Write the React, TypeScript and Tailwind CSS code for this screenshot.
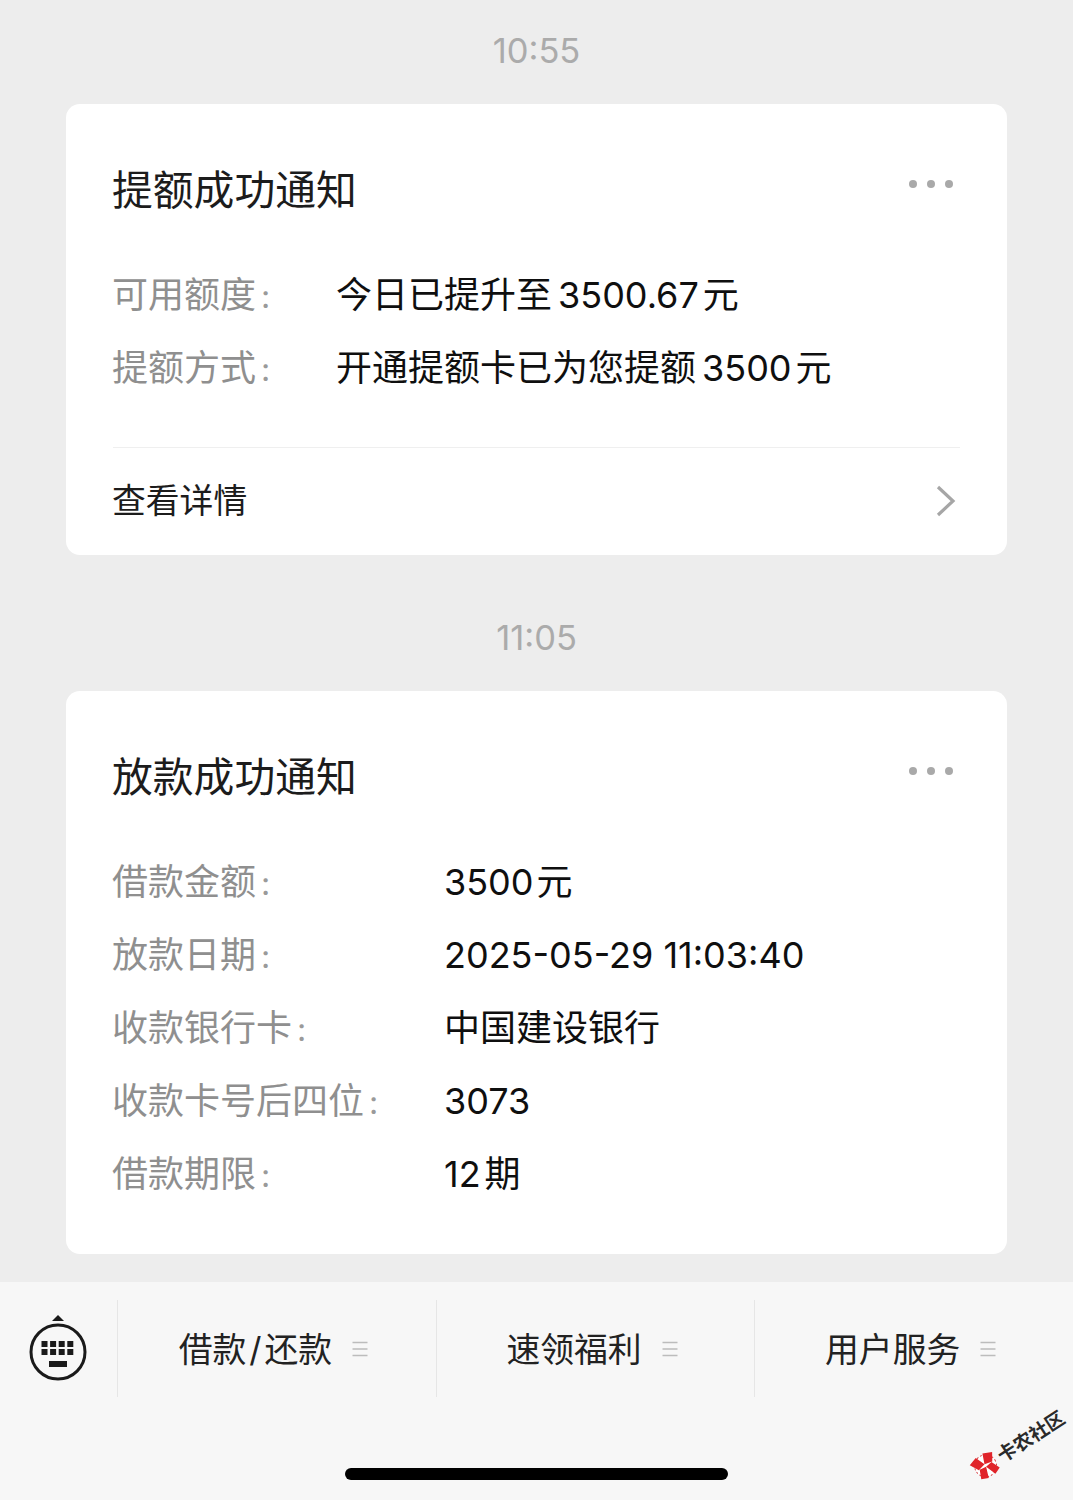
const FONT = '[font-family:Inter,"Noto_Sans_CJK_SC","Liberation_Sans",sans-serif]';

type Row = { label: string; value: React.ReactNode };

function Gap() {
  return <span className="inline-block w-[6px]" />;
}

function EndGap() {
  return <span className="inline-block w-[4px]" />;
}

function SmallGap() {
  return <span className="inline-block w-[3px]" />;
}

function Label({ text }: { text: string }) {
  return (
    <span className="text-[36px] leading-[73px] text-[#8f8f8f]">
      {text}
      <span className="ml-[5px] text-[32px] text-[#9a9a9a]">:</span>
    </span>
  );
}

function Dots() {
  return (
    <div className="mt-[-12px] mr-[7px] flex gap-[10px]">
      <span className="h-[8px] w-[8px] rounded-full bg-[#a9a9a9]" />
      <span className="h-[8px] w-[8px] rounded-full bg-[#a9a9a9]" />
      <span className="h-[8px] w-[8px] rounded-full bg-[#a9a9a9]" />
    </div>
  );
}

function Card({
  title,
  rows,
  labelW,
  footer,
}: {
  title: string;
  rows: Row[];
  labelW: string;
  footer?: boolean;
}) {
  return (
    <div className="mx-[66px] rounded-[14px] bg-white pt-[58px] pr-[47px] pl-[46px]">
      <div className="flex h-[56px] items-center justify-between">
        <div className="text-[40.8px] leading-[56px] whitespace-nowrap text-[#1c1c1c]">{title}</div>
        <Dots />
      </div>
      <div className="mt-[41px]">
        {rows.map((r, i) => (
          <div key={i} className="flex h-[73px] items-center">
            <div className={labelW}>
              <Label text={r.label} />
            </div>
            <div className="text-[36px] leading-[73px] whitespace-nowrap text-[#0f0f0f]">{r.value}</div>
          </div>
        ))}
      </div>
      {footer ? (
        <>
          <div className="mt-[42px] ml-[1px] h-px bg-[#efefef]" />
          <div className="flex h-[107px] items-center justify-between pb-[2px]">
            <div className="text-[33.8px] leading-[104px] text-[#1c1c1c]">查看详情</div>
            <svg width="20" height="32" viewBox="0 0 20 32" className="mr-[4px]" fill="none">
              <path d="M2 2 L17 16 L2 30" stroke="#a6a6a6" strokeWidth="3.2" strokeLinejoin="miter" />
            </svg>
          </div>
        </>
      ) : (
        <div className="h-[43px]" />
      )}
    </div>
  );
}

function Time({ children, h }: { children: string; h: string }) {
  return (
    <div className={`${h} flex items-center justify-center text-[34.5px] leading-none text-[#ababab]`}>
      {children}
    </div>
  );
}

function MenuIcon() {
  return (
    <svg width="16" height="16" viewBox="0 0 16 16" className="ml-[20px]" fill="none">
      <path d="M0.5 1.5H15.5M0.5 8H15.5M0.5 14.5H15.5" stroke="#bcbcbc" strokeWidth="1.6" />
    </svg>
  );
}

function Tab({ children }: { children: React.ReactNode }) {
  return (
    <div className="flex flex-1 items-center justify-center border-l border-[#e6e6e6] pr-[7px] text-[33.8px] leading-none text-[#222222]">
      <span className="pt-[2px]">{children}</span>
      <MenuIcon />
    </div>
  );
}

function KeyboardIcon() {
  const keys: [number, number][] = [];
  for (const y of [1, 9]) for (const x of [0, 8.6, 17.2, 25.8]) keys.push([x, y]);
  return (
    <svg width="60" height="68" viewBox="0 0 60 68" fill="none" className="ml-[-1px]">
      <path d="M30 0 L36 6 H24 Z" fill="#1a1a1a" />
      <circle cx="30" cy="37" r="27" stroke="#1a1a1a" strokeWidth="3" />
      <g transform="translate(13.5 25)">
        {keys.map(([x, y], i) => (
          <rect key={i} x={x} y={y} width="6" height="6" fill="#1a1a1a" />
        ))}
        <rect x="7.5" y="21" width="18" height="6" fill="#1a1a1a" />
      </g>
    </svg>
  );
}

function Watermark() {
  return (
    <div className="absolute top-[1459px] left-[973px] flex origin-left rotate-[-33deg] items-center gap-[1px]">
      <svg width="30" height="30" viewBox="0 0 30 30">
        <circle cx="15" cy="15" r="11" fill="#ffffff" stroke="#d9464a" strokeWidth="1" strokeDasharray="2 2" />
        <path d="M2 6 L11 3 L15 13 L7 15 Z M28 7 L19 3 L15 13 L23 15 Z" fill="#e0242a" />
        <path d="M4 24 L11 27 L15 16 L8 15 Z M26 24 L19 27 L15 16 L22 15 Z" fill="#e0242a" />
      </svg>
      <span className="text-[19px] leading-none font-bold whitespace-nowrap text-[#2a2a2a]">卡农社区</span>
    </div>
  );
}

export default function App() {
  return (
    <div className={`relative flex h-[1500px] w-[1073px] flex-col overflow-hidden bg-[#ededed] ${FONT}`}>
      <Time h="h-[104px] pb-[2px]">10:55</Time>
      <Card
        title="提额成功通知"
        labelW="w-[224px]"
        footer
        rows={[
          {
            label: "可用额度",
            value: (
              <>
                今日已提升至
                <Gap />
                3500.67
                <EndGap />元
              </>
            ),
          },
          {
            label: "提额方式",
            value: (
              <>
                开通提额卡已为您提额
                <Gap />
                3500
                <EndGap />元
              </>
            ),
          },
        ]}
      />
      <Time h="h-[136px] pt-[58px] pb-[28px]">11:05</Time>
      <Card
        title="放款成功通知"
        labelW="w-[332px]"
        rows={[
          {
            label: "借款金额",
            value: (
              <>
                3500
                <SmallGap />元
              </>
            ),
          },
          { label: "放款日期", value: "2025-05-29 11:03:40" },
          { label: "收款银行卡", value: "中国建设银行" },
          { label: "收款卡号后四位", value: "3073" },
          {
            label: "借款期限",
            value: (
              <>
                12
                <EndGap />期
              </>
            ),
          },
        ]}
      />
      <div className="mt-[28px] flex flex-1 flex-col bg-[#f7f7f7] pt-[18px]">
        <div className="flex h-[97px]">
          <div className="flex w-[117px] items-center justify-center pt-[1px]">
            <KeyboardIcon />
          </div>
          <Tab>
            借款
            <span className="mx-[3px]">/</span>
            还款
          </Tab>
          <Tab>速领福利</Tab>
          <Tab>用户服务</Tab>
        </div>
        <div className="mt-[71px] flex justify-center">
          <div className="h-[12px] w-[383px] rounded-full bg-black" />
        </div>
      </div>
      <Watermark />
    </div>
  );
}
